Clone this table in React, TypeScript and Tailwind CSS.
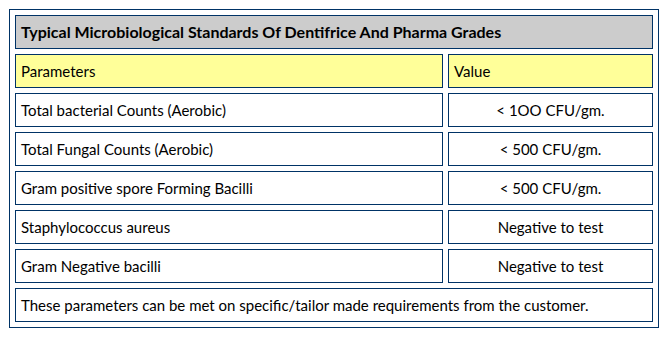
const rows: [string, string][] = [
  ["Total bacterial Counts (Aerobic)", "< 1OO CFU/gm."],
  ["Total Fungal Counts (Aerobic)", "< 500 CFU/gm."],
  ["Gram positive spore Forming Bacilli", "< 500 CFU/gm."],
  ["Staphylococcus aureus", "Negative to test"],
  ["Gram Negative bacilli", "Negative to test"],
];

const cell = "border border-[#003366] h-[34px] px-[5px] py-0 align-middle";

export default function App() {
  return (
    <div className="bg-white w-[667px] h-[337px] pt-[9px] pl-[9px] text-black text-[15px] font-['Lato','Liberation_Sans',sans-serif]">
      <table className="w-[650px] border border-[#003366] border-separate border-spacing-[5px] table-fixed">
        <colgroup>
          <col className="w-[428px]" />
          <col />
        </colgroup>
        <tbody>
          <tr>
            <td colSpan={2} className={`${cell} bg-[#cccccc] font-bold text-[16px]`}>
              Typical Microbiological Standards Of Dentifrice And Pharma Grades
            </td>
          </tr>
          <tr>
            <td className={`${cell} bg-[#ffff99]`}>Parameters</td>
            <td className={`${cell} bg-[#ffff99]`}>Value</td>
          </tr>
          {rows.map(([p, v]) => (
            <tr key={p}>
              <td className={cell}>{p}</td>
              <td className={`${cell} text-center`}>{v}</td>
            </tr>
          ))}
          <tr>
            <td colSpan={2} className={cell}>
              These parameters can be met on specific/tailor made requirements from the customer.
            </td>
          </tr>
        </tbody>
      </table>
    </div>
  );
}
